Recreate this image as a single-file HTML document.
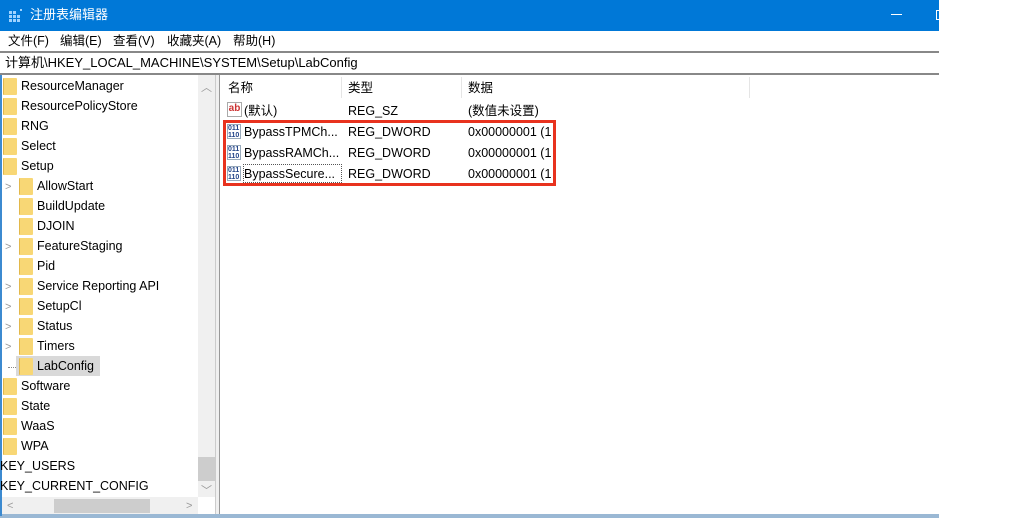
<!DOCTYPE html><html><head><meta charset="utf-8"><style>
*{margin:0;padding:0;box-sizing:border-box}
body{width:1011px;height:518px;background:#fff;font-family:"Liberation Sans","Noto Sans CJK SC",sans-serif;font-size:12.5px;line-height:16px;color:#000;position:relative;overflow:hidden}
.a{position:absolute;white-space:nowrap}
.f{position:absolute;width:14px;height:17px;background:#f8d775;border-left:1px solid #e3b84a;border-radius:1px}
.chev{position:absolute;color:#999;font-size:11px}
</style></head><body>
<div class="a" style="left:0;top:0;width:939px;height:31px;background:#0078d7"></div>
<svg class="a" style="left:8px;top:8px" width="16" height="16"><g fill="#9fd3ff"><rect x="1" y="3" width="3" height="3"/><rect x="5" y="3" width="3" height="3"/><rect x="1" y="7" width="3" height="3"/><rect x="5" y="7" width="3" height="3"/><rect x="9" y="7" width="3" height="3"/><rect x="1" y="11" width="3" height="3"/><rect x="5" y="11" width="3" height="3"/><rect x="9" y="11" width="3" height="3"/><rect x="12" y="1" width="2" height="2"/></g></svg>
<div class="a" style="left:30px;top:7px;color:#fff;font-size:13px">注册表编辑器</div>
<div class="a" style="left:891px;top:14px;width:11px;height:1px;background:#fff"></div>
<div class="a" style="left:936px;top:10px;width:5px;height:10px;border:1px solid #fff;border-right:none"></div>
<div class="a" style="left:8px;top:33px">文件(F)</div>
<div class="a" style="left:60px;top:33px">编辑(E)</div>
<div class="a" style="left:113px;top:33px">查看(V)</div>
<div class="a" style="left:167px;top:33px">收藏夹(A)</div>
<div class="a" style="left:233px;top:33px">帮助(H)</div>
<div class="a" style="left:0;top:51px;width:939px;height:2px;background:#888"></div>
<div class="a" style="left:5px;top:55px;font-size:13px">计算机\HKEY_LOCAL_MACHINE\SYSTEM\Setup\LabConfig</div>
<div class="a" style="left:0;top:73px;width:939px;height:2px;background:#888"></div>
<div class="a" style="left:198px;top:75px;width:17px;height:422px;background:#f0f0f0"></div>
<div class="a" style="left:198px;top:457px;width:17px;height:24px;background:#cdcdcd"></div>
<div class="chev" style="left:201px;top:80px">︿</div>
<div class="chev" style="left:201px;top:483px">﹀</div>
<div class="a" style="left:0;top:497px;width:198px;height:17px;background:#f0f0f0"></div>
<div class="a" style="left:54px;top:499px;width:96px;height:14px;background:#cdcdcd"></div>
<div class="chev" style="left:7px;top:498px">&lt;</div><div class="chev" style="left:186px;top:498px">&gt;</div>
<div class="a" style="left:215px;top:75px;width:5px;height:441px;background:#f0f0f0;border-left:1px solid #ccc;border-right:1px solid #999"></div>
<div class="a" style="left:0;top:514px;width:939px;height:4px;background:#9ab8d4"></div>
<div class="a" style="left:0;top:75px;width:2px;height:441px;background:#3c8ad0"></div>
<div class="a" style="left:16px;top:356px;width:84px;height:20px;background:#d9d9d9"></div>
<div class="a" style="left:8px;top:367px;width:8px;border-top:1px dotted #888"></div>
<div id="tree"></div>
<div class="a" style="left:341px;top:77px;width:1px;height:21px;background:#e5e5e5"></div>
<div class="a" style="left:461px;top:77px;width:1px;height:21px;background:#e5e5e5"></div>
<div class="a" style="left:749px;top:77px;width:1px;height:21px;background:#e5e5e5"></div>
<div class="a" style="left:228px;top:80px">名称</div>
<div class="a" style="left:348px;top:80px">类型</div>
<div class="a" style="left:468px;top:80px">数据</div>
<div class="a" style="left:227px;top:102px;width:15px;height:15px;border:1px solid #aaa;color:#c33;font-size:10px;font-weight:bold;line-height:12px;text-align:center">ab</div>
<div class="a" style="left:244px;top:103px">(默认)</div><div class="a" style="left:348px;top:103px">REG_SZ</div><div class="a" style="left:468px;top:103px">(数值未设置)</div>
<div class="a" style="left:244px;top:124px">BypassTPMCh...</div><div class="a" style="left:348px;top:124px">REG_DWORD</div><div class="a" style="left:468px;top:124px">0x00000001 (1</div>
<div class="a" style="left:244px;top:145px">BypassRAMCh...</div><div class="a" style="left:348px;top:145px">REG_DWORD</div><div class="a" style="left:468px;top:145px">0x00000001 (1</div>
<div class="a" style="left:243px;top:164px;width:99px;height:19px;border:1px dotted #555"></div>
<div class="a" style="left:244px;top:166px">BypassSecure...</div><div class="a" style="left:348px;top:166px">REG_DWORD</div><div class="a" style="left:468px;top:166px">0x00000001 (1</div>
<div class="a" style="left:227px;top:124px;width:14px;height:15px;border:1px solid #9ab;color:#248;font-size:7px;line-height:7px;font-weight:bold">011<br>110</div>
<div class="a" style="left:227px;top:145px;width:14px;height:15px;border:1px solid #9ab;color:#248;font-size:7px;line-height:7px;font-weight:bold">011<br>110</div>
<div class="a" style="left:227px;top:166px;width:14px;height:15px;border:1px solid #9ab;color:#248;font-size:7px;line-height:7px;font-weight:bold">011<br>110</div>
<div class="a" style="left:223px;top:120px;width:333px;height:66px;border:3px solid #e8321e"></div>
<script>
var r=[[0,"ResourceManager"],[0,"ResourcePolicyStore"],[0,"RNG"],[0,"Select"],[0,"Setup"],[1,"AllowStart",1],[1,"BuildUpdate"],[1,"DJOIN"],[1,"FeatureStaging",1],[1,"Pid"],[1,"Service Reporting API",1],[1,"SetupCl",1],[1,"Status",1],[1,"Timers",1],[1,"LabConfig"],[0,"Software"],[0,"State"],[0,"WaaS"],[0,"WPA"],[2,"KEY_USERS"],[2,"KEY_CURRENT_CONFIG"]];
var h="";r.forEach(function(e,i){var y=77+i*20;
if(e[0]==2){h+='<div class="a" style="left:0;top:'+(y+1)+'px">'+e[1]+'</div>';return;}
var fx=e[0]?19:3,tx=e[0]?37:21;
h+='<div class="f" style="left:'+fx+'px;top:'+(y+1)+'px"></div><div class="a" style="left:'+tx+'px;top:'+(y+1)+'px">'+e[1]+'</div>';
if(e[2])h+='<div class="chev" style="left:5px;top:'+(y+2)+'px">&gt;</div>';});
document.getElementById("tree").innerHTML=h;
</script>
</body></html>
